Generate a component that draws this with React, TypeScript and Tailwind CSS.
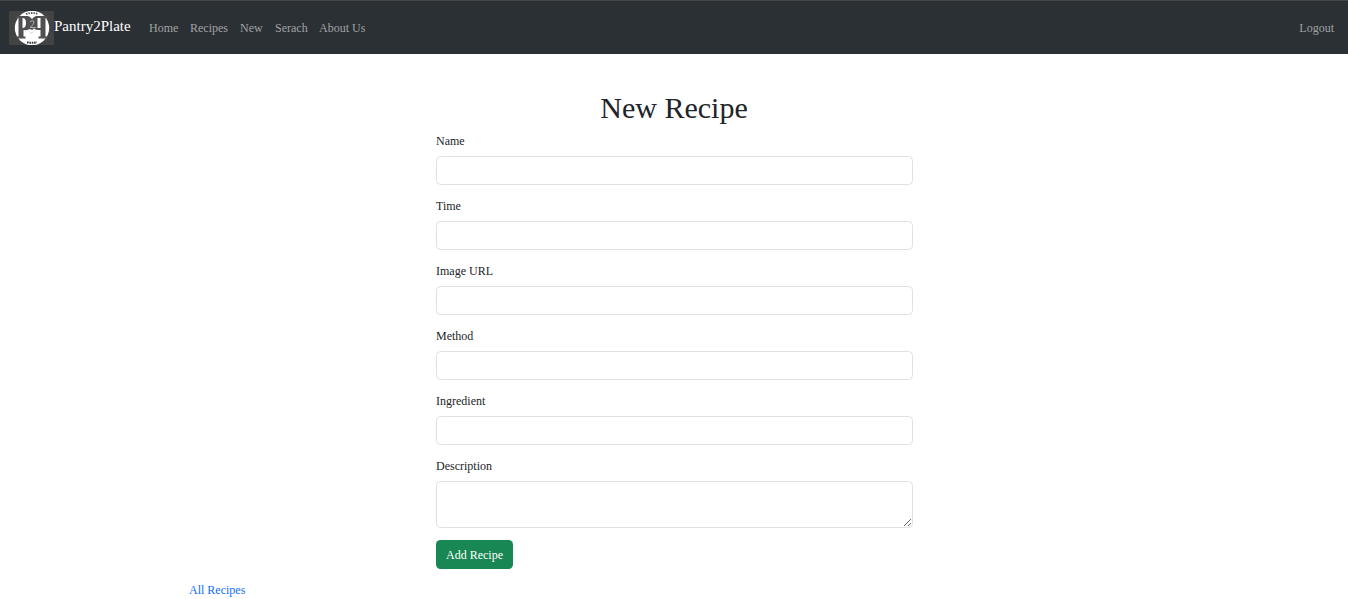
const links = [
  { label: "Home", width: "w-[30px]" },
  { label: "Recipes", width: "w-[39px]" },
  { label: "New", width: "w-[24px]" },
  { label: "Serach", width: "w-[33px]" },
  { label: "About Us", width: "w-[47px]" },
];
const fields = ["Name", "Time", "Image URL", "Method", "Ingredient"];

function Logo() {
  return (
    <svg viewBox="0 0 45 34" className="h-[34px] w-[45px] shrink-0" aria-hidden="true">
      <rect width="45" height="34" fill="#434343" />
      <circle cx="23" cy="17" r="17.2" fill="#fff" />
      <path d="M17 3Q23 1 29 3" fill="none" stroke="#555" strokeWidth="1.8" strokeDasharray="1.5 1" />
      <path d="M18 31.2Q23 32.4 28 31.2" fill="none" stroke="#333" strokeWidth="2" strokeDasharray="1.6 .8" />
      <path
        fill="#505053"
        fillRule="evenodd"
        d="M7.5 5H19Q21 5.5 23 8Q25 5.5 27 5H38.5V7H36.5V25.5H38.5V27.5H29.5V25.5H31.5V19Q27 19.5 25 17.5L23 19L21 18Q19 19.5 14.5 19V25.5H16.5V27.5H7.5V25.5H9.5V7H7.5ZM13.5 7V17Q17 17 17 12T13.5 7ZM28.5 7V17H31.5V7Z"
      />
      <path d="M21 11Q23 8.5 25 10.5Q25 14 21 16.5H27" fill="none" stroke="#b5b5b5" strokeWidth="0.9" />
      <path d="M20 20.5L23 22.5L26 19.5" fill="none" stroke="#ccc" strokeWidth=".7" />
    </svg>
  );
}

export default function App() {
  return (
    <div className="h-[599px] overflow-hidden bg-white font-['Liberation_Serif','Times_New_Roman',serif] text-[12px] leading-[18px] text-[#212529]">
      <nav className="flex h-[54px] items-center border-t border-[#444648] bg-[#2b3035] pr-[14px] pl-[9px] text-[#a0a2a4]">
        <a href="#" className="flex items-center text-[15px] text-white">
          <Logo />
          <span className="-mt-[4px] w-[77px] whitespace-nowrap">Pantry2Plate</span>
        </a>
        <div className="ml-[18px] flex gap-[11px]">
          {links.map((link) => (
            <a key={link.label} href="#" className={`${link.width} whitespace-nowrap`}>
              {link.label}
            </a>
          ))}
        </div>
        <a href="#" className="ml-auto">Logout</a>
      </nav>
      <main className="mx-auto w-[970px] pt-[36px]">
        <h1 className="mb-[6px] text-center text-[30px] leading-[36px]">New Recipe</h1>
        <form className="ml-[247px] w-[477px]">
          {fields.map((field) => (
            <label key={field} className="mb-[12px] block">
              <span className="mb-[6px] block">{field}</span>
              <input className="block h-[29px] w-full rounded-[4.5px] border border-[#dee2e6] bg-white px-[9px]" />
            </label>
          ))}
          <label className="mb-[12px] block">
            <span className="mb-[6px] block">Description</span>
            <textarea className="block h-[47px] w-full resize-y rounded-[4.5px] border border-[#dee2e6] bg-white px-[9px] py-[4.5px]" />
          </label>
          <button type="button" className="block h-[29px] w-[77px] rounded-[4.5px] bg-[#198754] whitespace-nowrap text-white">
            Add Recipe
          </button>
        </form>
        <a href="#" className="mt-[12px] block w-fit text-[#0d6efd]">All Recipes</a>
      </main>
    </div>
  );
}
